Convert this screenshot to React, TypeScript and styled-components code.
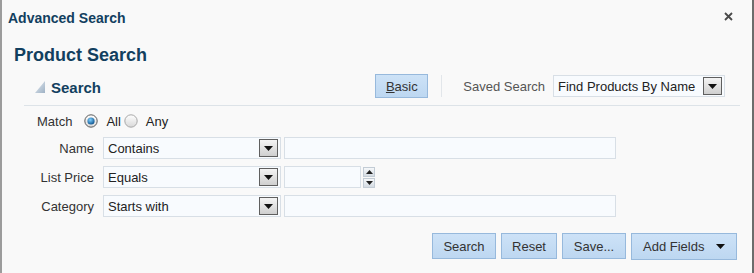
import React from "react";
import styled, { createGlobalStyle } from "styled-components";

const GlobalStyle = createGlobalStyle`
  html, body {
    margin: 0;
    padding: 0;
    background: #f9f9f9;
  }
  * {
    box-sizing: border-box;
  }
`;

const FONT = `"Liberation Sans", Arial, sans-serif`;
const NAVY = "#123f5f";

const DropArrow = () => (
  <svg width="9" height="5" viewBox="0 0 9 5">
    <path d="M0 0 L9 0 L4.5 5 Z" fill="#111" />
  </svg>
);

const Radio = ({ checked }: { checked?: boolean }) => (
  <svg width="14" height="14" viewBox="0 0 14 14">
    <defs>
      <radialGradient id="dot" cx="0.4" cy="0.35" r="0.7">
        <stop offset="0" stopColor="#7fd0ff" />
        <stop offset="1" stopColor="#0a4f8a" />
      </radialGradient>
      <linearGradient id="off" x1="0" y1="0" x2="0" y2="1">
        <stop offset="0" stopColor="#ffffff" />
        <stop offset="1" stopColor="#d8d8d8" />
      </linearGradient>
    </defs>
    <circle cx="7" cy="7" r="6.2" fill="url(#off)" stroke={checked ? "#5a5a5a" : "#a8a8a8"} strokeWidth="1" />
    {checked && <circle cx="7" cy="7" r="3.6" fill="url(#dot)" />}
  </svg>
);

const App = () => {
  return (
    <>
      <GlobalStyle />
      <Dialog>
        <TitleBar>
          <Title>Advanced Search</Title>
          <Close>
            <svg width="9" height="9" viewBox="0 0 9 9">
              <path d="M1 1 L8 8 M8 1 L1 8" stroke="#4a4a4a" strokeWidth="1.8" />
            </svg>
          </Close>
        </TitleBar>

        <PageTitle>Product Search</PageTitle>

        <Panel>
          <PanelHeader>
            <HeaderLeft>
              <svg width="10" height="12" viewBox="0 0 10 12">
                <defs>
                  <linearGradient id="tri" x1="0" y1="0" x2="1" y2="1">
                    <stop offset="0" stopColor="#e4ebf2" />
                    <stop offset="1" stopColor="#9eb1c4" />
                  </linearGradient>
                </defs>
                <path d="M10 0 L10 12 L0 12 Z" fill="url(#tri)" />
              </svg>
              <PanelTitle>Search</PanelTitle>
            </HeaderLeft>
            <HeaderRight>
              <Button $w={53} $h={24}>
                <u>B</u>asic
              </Button>
              <Divider />
              <SavedLabel>Saved Search</SavedLabel>
              <Select $w={172}>
                <span>Find Products By Name</span>
                <DropButton>
                  <DropArrow />
                </DropButton>
              </Select>
            </HeaderRight>
          </PanelHeader>

          <Form>
            <MatchRow>
              <MatchLabel>Match</MatchLabel>
              <RadioOption>
                <Radio checked />
                <span>All</span>
              </RadioOption>
              <RadioOption>
                <Radio />
                <span>Any</span>
              </RadioOption>
            </MatchRow>

            <FieldRow>
              <Label>Name</Label>
              <Select $w={178}>
                <span>Contains</span>
                <DropButton>
                  <DropArrow />
                </DropButton>
              </Select>
              <TextInput $w={332} />
            </FieldRow>

            <FieldRow>
              <Label>List Price</Label>
              <Select $w={178}>
                <span>Equals</span>
                <DropButton>
                  <DropArrow />
                </DropButton>
              </Select>
              <NumberWrap>
                <TextInput $w={77} />
                <Spinner>
                  <SpinButton>
                    <svg width="7" height="4" viewBox="0 0 7 4">
                      <path d="M0 4 L7 4 L3.5 0 Z" fill="#222" />
                    </svg>
                  </SpinButton>
                  <SpinButton>
                    <svg width="7" height="4" viewBox="0 0 7 4">
                      <path d="M0 0 L7 0 L3.5 4 Z" fill="#222" />
                    </svg>
                  </SpinButton>
                </Spinner>
              </NumberWrap>
            </FieldRow>

            <FieldRow>
              <Label>Category</Label>
              <Select $w={178}>
                <span>Starts with</span>
                <DropButton>
                  <DropArrow />
                </DropButton>
              </Select>
              <TextInput $w={332} />
            </FieldRow>
          </Form>

          <Actions>
            <Button $w={64} $h={26}>Search</Button>
            <Button $w={56} $h={26}>Reset</Button>
            <Button $w={64} $h={26}>Save...</Button>
            <MenuButton>
              <span>Add Fields</span>
              <DropArrow />
            </MenuButton>
          </Actions>
        </Panel>
      </Dialog>
    </>
  );
};

const Dialog = styled.div`
  width: 754px;
  height: 273px;
  background: #f9f9f9;
  border-left: 2px solid #9c9c9c;
  border-right: 2px solid #6c6c6c;
  font-family: ${FONT};
  font-size: 13px;
  color: #333;
  overflow: hidden;
`;

const TitleBar = styled.div`
  display: flex;
  align-items: center;
  justify-content: space-between;
  height: 36px;
  padding: 0 19px 0 6px;
`;

const Title = styled.div`
  font-size: 14px;
  font-weight: bold;
  color: ${NAVY};
`;

const Close = styled.div`
  display: flex;
  align-items: center;
  margin-top: -3px;
`;

const PageTitle = styled.div`
  margin: 8px 0 0 12px;
  font-size: 18px;
  font-weight: bold;
  color: ${NAVY};
  line-height: 22px;
`;

const Panel = styled.div`
  margin: 8px 12px 0 22px;
`;

const PanelHeader = styled.div`
  display: flex;
  align-items: center;
  justify-content: space-between;
  padding: 0 15px 7px 11px;
  border-bottom: 1px solid #dde3e8;
`;

const HeaderLeft = styled.div`
  display: flex;
  align-items: center;
  gap: 6px;
  padding-top: 2px;
`;

const PanelTitle = styled.div`
  font-size: 15px;
  font-weight: bold;
  color: ${NAVY};
`;

const HeaderRight = styled.div`
  display: flex;
  align-items: center;
`;

const Button = styled.div<{ $w: number; $h: number }>`
  width: ${({ $w }) => $w}px;
  height: ${({ $h }) => $h}px;
  display: flex;
  align-items: center;
  justify-content: center;
  background: linear-gradient(#cde2f7, #bdd7f1);
  border: 1px solid #97b9dc;
  color: #333;
  font-size: 13px;
`;

const Divider = styled.div`
  width: 1px;
  height: 22px;
  background: #e2e6ea;
  margin: 0 21px 0 13px;
`;

const SavedLabel = styled.span`
  color: #555;
  margin-right: 8px;
`;

const Select = styled.div<{ $w: number }>`
  width: ${({ $w }) => $w}px;
  height: 22px;
  display: flex;
  align-items: center;
  justify-content: space-between;
  padding: 0 2px 0 4px;
  background: #f8fbfe;
  border: 1px solid #d8dfe6;
  color: #222;
  white-space: nowrap;
`;

const DropButton = styled.div`
  width: 19px;
  height: 18px;
  display: flex;
  align-items: center;
  justify-content: center;
  background: linear-gradient(#f4f4f4, #cfcfcf);
  border: 1px solid #5f5f5f;
  flex-shrink: 0;
`;

const Form = styled.div`
  display: flex;
  flex-direction: column;
  gap: 7px;
  padding: 7px 0 0 13px;
`;

const MatchRow = styled.div`
  display: flex;
  align-items: center;
  height: 16px;
  margin-bottom: 1px;
`;

const MatchLabel = styled.span`
  margin-right: 12px;
`;

const RadioOption = styled.label`
  display: flex;
  align-items: center;
  gap: 8px;
  margin-right: 3px;
  color: #222;
`;

const FieldRow = styled.div`
  display: flex;
  align-items: center;
  gap: 3px;
`;

const Label = styled.span`
  width: 57px;
  text-align: right;
  margin-right: 6px;
  white-space: nowrap;
`;

const TextInput = styled.div<{ $w: number }>`
  width: ${({ $w }) => $w}px;
  height: 22px;
  background: #f8fbfe;
  border: 1px solid #d8dfe6;
`;

const NumberWrap = styled.div`
  display: flex;
  align-items: center;
  gap: 2px;
`;

const Spinner = styled.div`
  display: flex;
  flex-direction: column;
  gap: 1px;
`;

const SpinButton = styled.div`
  width: 12px;
  height: 10px;
  display: flex;
  align-items: center;
  justify-content: center;
  background: linear-gradient(#f6f8fa, #d4dbe2);
  border: 1px solid #c3ccd5;
`;

const Actions = styled.div`
  display: flex;
  justify-content: flex-end;
  gap: 5px;
  padding: 16px 3px 0 0;
`;

const MenuButton = styled.div`
  width: 106px;
  height: 27px;
  display: flex;
  align-items: center;
  justify-content: space-between;
  padding: 0 11px 0 11px;
  background: linear-gradient(#cde2f7, #bdd7f1);
  border: 1px solid #97b9dc;
  color: #333;
  font-size: 13px;
`;

export default App;
